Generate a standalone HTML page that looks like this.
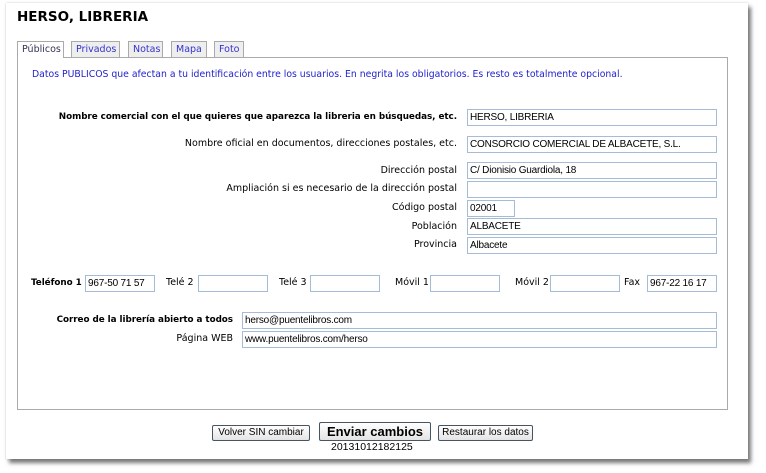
<!DOCTYPE html>
<html><head><meta charset="utf-8"><style>
*{margin:0;padding:0;box-sizing:border-box}
body{width:766px;height:473px;background:#fff;position:relative;overflow:hidden;font-family:"DejaVu Sans",Verdana,sans-serif;font-size:9.5px;color:#000}
.win{position:absolute;left:6px;top:3px;width:742px;height:456px;background:#fff;box-shadow:3px 4px 4px #777,0 0 2px #ccc}
.a{position:absolute;white-space:nowrap}
.b{font-weight:bold;font-size:8.8px;letter-spacing:-0.05px}
.r{text-align:right}
.in{position:absolute;height:17px;border:1px solid #a5bcd8;background:#fff;font-family:"Liberation Sans",Arial,sans-serif;font-size:10px;padding:2px 0 0 2px;white-space:nowrap;overflow:hidden;letter-spacing:-0.2px}
.tab{position:absolute;top:41px;height:16px;border:1px solid #aaa;border-bottom:none;background:#eee;color:#33c;padding:2px 4px 0;font-size:9.5px}
.btn{position:absolute;border:1px solid #456;border-radius:2px;background:linear-gradient(#fff,#e4e4e4);font-family:"Liberation Sans",Arial,sans-serif;font-size:10px;text-align:center;white-space:nowrap}
</style></head><body>
<div class="win"></div>
<div class="a" style="left:17px;top:9px;font-size:13.5px;font-weight:bold">HERSO, LIBRERIA</div>
<div style="position:absolute;left:17px;top:57px;width:711px;height:353px;border:1px solid #aaa;background:#fff"></div>
<div class="tab" style="left:17px;width:47px;background:#fff;color:#335;height:17px">Públicos</div>
<div class="tab" style="left:71px;width:49px">Privados</div>
<div class="tab" style="left:128px;width:35px">Notas</div>
<div class="tab" style="left:171px;width:36px">Mapa</div>
<div class="tab" style="left:214px;width:30px">Foto</div>
<div class="a" style="left:32px;top:69px;color:#22c;font-size:9.3px">Datos PUBLICOS que afectan a tu identificación entre los usuarios. En negrita los obligatorios. Es resto es totalmente opcional.</div>

<div class="a r b" style="right:309px;top:112px">Nombre comercial con el que quieres que aparezca la libreria en búsquedas, etc.</div>
<div class="in" style="left:467px;top:109px;width:250px">HERSO, LIBRERIA</div>
<div class="a r" style="right:309px;top:138px">Nombre oficial en documentos, direcciones postales, etc.</div>
<div class="in" style="left:467px;top:136px;width:250px">CONSORCIO COMERCIAL DE ALBACETE, S.L.</div>
<div class="a r" style="right:309px;top:165px">Dirección postal</div>
<div class="in" style="left:467px;top:162px;width:250px">C/ Dionisio Guardiola, 18</div>
<div class="a r" style="right:309px;top:183px">Ampliación si es necesario de la dirección postal</div>
<div class="in" style="left:467px;top:181px;width:250px"></div>
<div class="a r" style="right:309px;top:202px">Código postal</div>
<div class="in" style="left:467px;top:200px;width:48px">02001</div>
<div class="a r" style="right:309px;top:221px">Población</div>
<div class="in" style="left:467px;top:218px;width:250px">ALBACETE</div>
<div class="a r" style="right:309px;top:239px">Provincia</div>
<div class="in" style="left:467px;top:237px;width:250px">Albacete</div>

<div class="a b" style="left:31px;top:278px">Teléfono 1</div>
<div class="in" style="left:85px;top:275px;width:70px">967-50 71 57</div>
<div class="a" style="left:166px;top:277px">Telé 2</div>
<div class="in" style="left:198px;top:275px;width:70px"></div>
<div class="a" style="left:279px;top:277px">Telé 3</div>
<div class="in" style="left:310px;top:275px;width:70px"></div>
<div class="a" style="left:395px;top:277px">Móvil 1</div>
<div class="in" style="left:430px;top:275px;width:70px"></div>
<div class="a" style="left:515px;top:277px">Móvil 2</div>
<div class="in" style="left:550px;top:275px;width:70px"></div>
<div class="a" style="left:624px;top:277px">Fax</div>
<div class="in" style="left:647px;top:275px;width:70px">967-22 16 17</div>

<div class="a r b" style="right:533px;top:315px">Correo de la librería abierto a todos</div>
<div class="in" style="left:242px;top:312px;width:475px">herso@puentelibros.com</div>
<div class="a r" style="right:533px;top:333px">Página WEB</div>
<div class="in" style="left:242px;top:331px;width:475px">www.puentelibros.com/herso</div>

<div class="btn" style="left:212px;top:425px;width:98px;height:16px;line-height:14px">Volver SIN cambiar</div>
<div class="btn" style="left:319px;top:422px;width:112px;height:19px;line-height:17px;font-size:13px;font-weight:bold">Enviar cambios</div>
<div class="btn" style="left:438px;top:425px;width:95px;height:16px;line-height:14px">Restaurar los datos</div>
<div class="a" style="left:331px;top:441px;font-family:'Liberation Sans',Arial,sans-serif;font-size:10.5px">20131012182125</div>
</body></html>
